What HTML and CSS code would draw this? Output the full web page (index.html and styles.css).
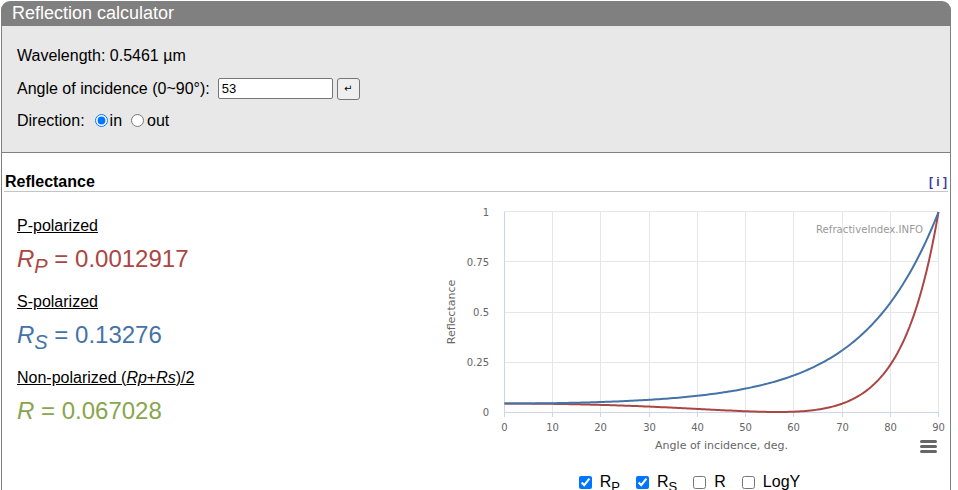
FILE: index.html
```html
<!DOCTYPE html>
<html lang="en">
<head>
<meta charset="utf-8">
<title>Reflection calculator</title>
<link rel="stylesheet" href="styles.css">
</head>
<body>
<div class="calc">
  <div class="title">Reflection calculator</div>
  <div class="inputs">
    <div class="row">Wavelength: 0.5461 µm</div>
    <div class="row">
      <label for="aoi">Angle of incidence (0~90°):</label>
      <input id="aoi" class="num" type="text" value="53">
      <button class="go" type="button">↵</button>
    </div>
    <div class="row">
      <span>Direction:</span>
      <input class="radio first" type="radio" name="dir" checked><span>in</span>
      <input class="radio" type="radio" name="dir"><span>out</span>
    </div>
  </div>
  <div class="results">
    <div class="head"><span class="htitle">Reflectance</span><span class="info">[ i ]</span></div>
    <div class="body">
      <div class="values">
        <div class="label">P-polarized</div>
        <div class="val rp"><i>R</i><sub><i>P</i></sub> = 0.0012917</div>
        <div class="label">S-polarized</div>
        <div class="val rs"><i>R</i><sub><i>S</i></sub> = 0.13276</div>
        <div class="label">Non-polarized (<i>Rp</i>+<i>Rs</i>)/2</div>
        <div class="val rn"><i>R</i> = 0.067028</div>
      </div>
      <div class="chart">
        <svg class="plot" width="509" height="270" viewBox="0 0 509 270">
          <g class="grid">
            <line x1="112.5" y1="16" x2="112.5" y2="216"/>
            <line x1="160.5" y1="16" x2="160.5" y2="216"/>
            <line x1="209.5" y1="16" x2="209.5" y2="216"/>
            <line x1="257.5" y1="16" x2="257.5" y2="216"/>
            <line x1="305.5" y1="16" x2="305.5" y2="216"/>
            <line x1="353.5" y1="16" x2="353.5" y2="216"/>
            <line x1="402.5" y1="16" x2="402.5" y2="216"/>
            <line x1="450.5" y1="16" x2="450.5" y2="216"/>
            <line x1="498.5" y1="16" x2="498.5" y2="216"/>
            <line x1="64.5" y1="15.5" x2="498.5" y2="15.5"/>
            <line x1="64.5" y1="65.5" x2="498.5" y2="65.5"/>
            <line x1="64.5" y1="116.5" x2="498.5" y2="116.5"/>
            <line x1="64.5" y1="166.5" x2="498.5" y2="166.5"/>
          </g>
          <g class="axis">
            <line x1="64.5" y1="15.5" x2="64.5" y2="216"/>
            <line x1="64" y1="216.5" x2="499" y2="216.5"/>
            <line x1="64.5" y1="216" x2="64.5" y2="221"/>
            <line x1="112.5" y1="216" x2="112.5" y2="221"/>
            <line x1="160.5" y1="216" x2="160.5" y2="221"/>
            <line x1="209.5" y1="216" x2="209.5" y2="221"/>
            <line x1="257.5" y1="216" x2="257.5" y2="221"/>
            <line x1="305.5" y1="216" x2="305.5" y2="221"/>
            <line x1="353.5" y1="216" x2="353.5" y2="221"/>
            <line x1="402.5" y1="216" x2="402.5" y2="221"/>
            <line x1="450.5" y1="216" x2="450.5" y2="221"/>
            <line x1="498.5" y1="216" x2="498.5" y2="221"/>
          </g>
          <g class="ylab">
            <text x="49" y="20">1</text>
            <text x="49" y="70">0.75</text>
            <text x="49" y="120">0.5</text>
            <text x="49" y="170">0.25</text>
            <text x="49" y="220">0</text>
          </g>
          <g class="xlab">
            <text x="64.5" y="235">0</text>
            <text x="112.5" y="235">10</text>
            <text x="160.5" y="235">20</text>
            <text x="209.5" y="235">30</text>
            <text x="257.5" y="235">40</text>
            <text x="305.5" y="235">50</text>
            <text x="353.5" y="235">60</text>
            <text x="402.5" y="235">70</text>
            <text x="450.5" y="235">80</text>
            <text x="498.5" y="235">90</text>
          </g>
          <text class="xtitle" x="281.5" y="253">Angle of incidence, deg.</text>
          <text class="ytitle" x="15" y="116" transform="rotate(-90 15 116)">Reflectance</text>
          <text class="mark" x="483" y="37" textLength="107" lengthAdjust="spacingAndGlyphs">RefractiveIndex.INFO</text>
          <path id="rp" class="curve curve-p" d=""/>
          <path id="rs" class="curve curve-s" d=""/>
          <g class="menu">
            <line x1="481.5" y1="245.5" x2="495.5" y2="245.5"/>
            <line x1="481.5" y1="250.5" x2="495.5" y2="250.5"/>
            <line x1="481.5" y1="255.5" x2="495.5" y2="255.5"/>
          </g>
        </svg>
        <div class="legend">
          <label class="item"><input type="checkbox" checked><span>R<sub>P</sub></span></label>
          <label class="item"><input type="checkbox" checked><span>R<sub>S</sub></span></label>
          <label class="item"><input type="checkbox"><span>R</span></label>
          <label class="item"><input type="checkbox"><span>LogY</span></label>
        </div>
      </div>
    </div>
  </div>
</div>
<script src="script.js"></script>
</body>
</html>
```

FILE: styles.css
```css
html, body {
  margin: 0;
  padding: 0;
  background: #ffffff;
}
body {
  font-family: "Liberation Sans", Arial, sans-serif;
  font-size: 16px;
  color: #000;
  overflow: hidden;
}
.calc {
  width: 950px;
  margin: 1px 0 0 1px;
}
.title {
  height: 25px;
  line-height: 25px;
  background: #808080;
  color: #ffffff;
  font-size: 18px;
  padding-left: 11px;
  border-radius: 9px 9px 0 0;
}
.inputs {
  background: #e8e8e8;
  border-left: 1px solid #808080;
  border-right: 1px solid #808080;
  border-bottom: 1px solid #808080;
  box-sizing: border-box;
  height: 127px;
  padding: 14px 0 0 15px;
}
.row {
  display: flex;
  align-items: center;
  height: 32px;
}
.row:nth-child(2) { height: 33px; }
.row:nth-child(3) { height: 31px; }
.num {
  box-sizing: border-box;
  width: 115px;
  height: 21px;
  margin: 0 0 0 8px;
  padding: 1px 3px;
  border: 1px solid #767676;
  border-radius: 2px;
  background: #fff;
  font-family: "Liberation Sans", Arial, sans-serif;
  font-size: 13px;
  color: #000;
}
.go {
  box-sizing: border-box;
  width: 23px;
  height: 22px;
  margin: 0 0 0 4px;
  padding: 0;
  border: 1px solid #767676;
  border-radius: 3px;
  background: #efefef;
  font-family: "DejaVu Sans", sans-serif;
  font-size: 10px;
  color: #000;
  line-height: 1;
}
.radio {
  width: 13px;
  height: 13px;
  margin: 0 2px 0 10px;
}
.radio + span + .radio {
  margin: 0 3px 0 9px;
}
.results {
  border-left: 1px solid #808080;
  border-right: 1px solid #808080;
  height: 340px;
}
.head {
  display: flex;
  justify-content: space-between;
  align-items: center;
  margin: 0 2px;
  padding: 20px 1px 0 1px;
  line-height: 18px;
  border-bottom: 1px solid #c4c4c4;
}
.htitle {
  font-weight: bold;
  font-size: 16px;
}
.info {
  font-weight: bold;
  font-size: 12px;
  color: #3b3b9e;
}
.body {
  display: flex;
}
.values {
  width: 423px;
  padding: 25px 0 0 15px;
}
.label {
  line-height: 18px;
  text-decoration: underline;
}
.val {
  font-size: 24px;
  line-height: 28px;
  margin: 10px 0 20px;
}
.val sub {
  font-size: 20px;
  line-height: 0;
}
.rp { color: #aa4643; }
.rs { color: #4572a7; }
.rn { color: #89a54e; }
.chart {
  width: 509px;
  margin-top: 4px;
}
.plot {
  display: block;
  font-family: "DejaVu Sans", sans-serif;
}
.grid line {
  stroke: #e6e6e6;
  stroke-width: 1;
}
.axis line {
  stroke: #ccd6eb;
  stroke-width: 1;
}
.ylab text {
  font-size: 10px;
  fill: #666666;
  text-anchor: end;
}
.xlab text {
  font-size: 10px;
  fill: #666666;
  text-anchor: middle;
}
.xtitle, .ytitle {
  font-size: 11px;
  fill: #666666;
  text-anchor: middle;
}
.mark {
  font-size: 10px;
  fill: #999999;
  text-anchor: end;
}
.curve {
  fill: none;
  stroke-width: 2;
  stroke-linejoin: round;
}
.curve-p { stroke: #aa4643; }
.curve-s { stroke: #4572a7; }
.menu line {
  stroke: #666666;
  stroke-width: 3;
  stroke-linecap: round;
}
.legend {
  display: flex;
  justify-content: center;
  gap: 16px;
  margin-top: 7px;
  padding-left: 0;
  padding-right: 10px;
  line-height: 18px;
  font-size: 16px;
}
.item {
  display: flex;
  align-items: center;
}
.item input {
  width: 13px;
  height: 13px;
  margin: 0 8px 0 0;
}
.item sub {
  font-size: 13px;
  line-height: 0;
}
```

FILE: script.js
```js
(function () {
  var n = 1.5187;
  function curve(kind) {
    var d = '';
    for (var i = 0; i <= 180; i++) {
      var deg = i * 0.5;
      var a = deg * Math.PI / 180;
      var ci = Math.cos(a), si = Math.sin(a);
      var st = si / n, ct = Math.sqrt(1 - st * st);
      var r = kind === 's' ? (ci - n * ct) / (ci + n * ct) : (n * ci - ct) / (n * ci + ct);
      var R = r * r;
      var x = 64.5 + deg / 90 * 434;
      var y = 216 - R * 200;
      d += (i ? 'L' : 'M') + x.toFixed(2) + ' ' + y.toFixed(2);
    }
    return d;
  }
  document.getElementById('rp').setAttribute('d', curve('p'));
  document.getElementById('rs').setAttribute('d', curve('s'));
})();
```
